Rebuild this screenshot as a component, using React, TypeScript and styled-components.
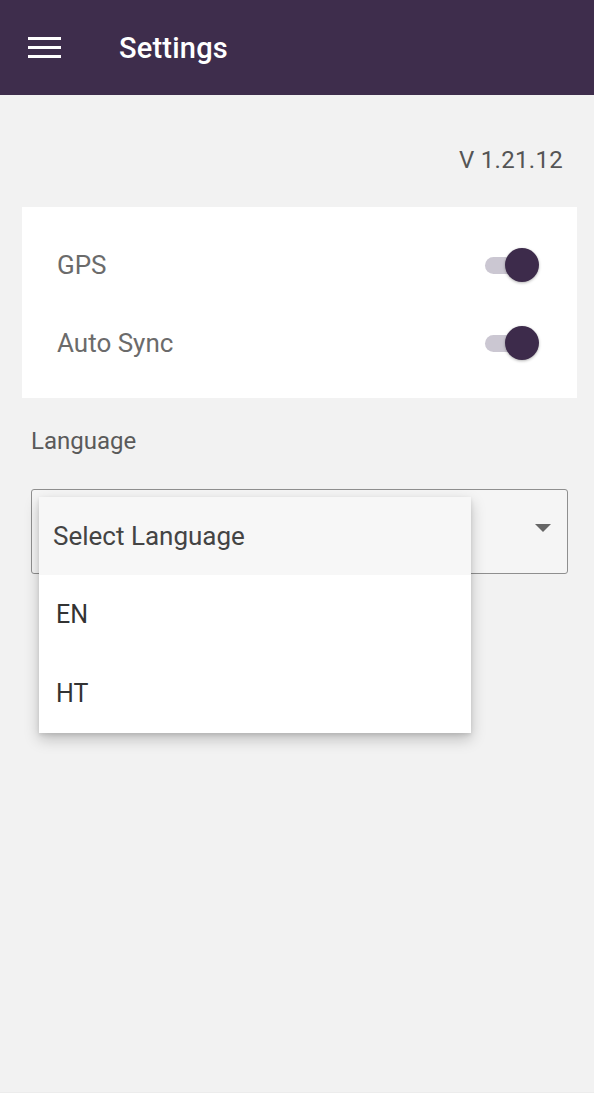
import React, { useState } from 'react'
import styled, { createGlobalStyle } from 'styled-components'

const GlobalStyle = createGlobalStyle`
  html, body {
    margin: 0;
    padding: 0;
    background: #f2f2f2;
    font-family: Roboto, 'Noto Sans', sans-serif;
  }
`

const Page = styled.div`
  display: flex;
  flex-direction: column;
  height: 1106px;
  background: #f2f2f2;
  overflow: hidden;
`

const Header = styled.header`
  display: flex;
  align-items: center;
  height: 95px;
  padding: 0 0 0 28px;
  gap: 58px;
  background: #3e2d4c;
  color: #ffffff;
  flex-shrink: 0;
`

const Title = styled.h1`
  margin: 0;
  font-size: 29px;
  font-weight: 500;
  letter-spacing: 0.2px;
`

const Body = styled.main`
  flex: 1;
  display: flex;
  flex-direction: column;
  padding: 0 17px 0 22px;
`

const Version = styled.div`
  align-self: flex-end;
  margin: 49px 14px 0 0;
  font-size: 24px;
  letter-spacing: 0.3px;
  color: #555555;
  line-height: 32px;
`

const Card = styled.section`
  margin-top: 31px;
  background: #ffffff;
  padding: 38px 38px 35px 35px;
  display: flex;
  flex-direction: column;
  gap: 38px;
`

const Row = styled.div`
  display: flex;
  align-items: center;
  justify-content: space-between;
  height: 40px;
`

const RowLabel = styled.span`
  font-size: 26px;
  color: #6b6b6b;
`

const Track = styled.button<{ $on: boolean }>`
  position: relative;
  width: 56px;
  height: 34px;
  border: 0;
  padding: 0;
  background: transparent;
  cursor: pointer;

  &::before {
    content: '';
    position: absolute;
    left: 2px;
    top: 9px;
    width: 42px;
    height: 17px;
    border-radius: 9px;
    background: ${({ $on }) => ($on ? '#cbc7d2' : '#cfcfcf')};
  }
`

const Thumb = styled.span<{ $on: boolean }>`
  position: absolute;
  top: 0;
  left: ${({ $on }) => ($on ? '22px' : '0')};
  width: 34px;
  height: 34px;
  border-radius: 50%;
  background: ${({ $on }) => ($on ? '#3d2b4b' : '#fafafa')};
  box-shadow: 0 1px 3px rgba(0, 0, 0, 0.3);
`

const SectionLabel = styled.div`
  margin: 28px 0 0 9px;
  font-size: 24px;
  color: #5a5a5a;
  line-height: 30px;
`

const SelectWrap = styled.div`
  position: relative;
  margin: 33px 9px 0 9px;
`

const SelectBox = styled.div`
  height: 83px;
  border: 1px solid #8f8f8f;
  border-radius: 3px;
  background: #f5f5f5;
  display: flex;
  align-items: center;
  justify-content: flex-end;
  padding-right: 16px;
`

const Caret = styled.span`
  width: 0;
  height: 0;
  border-left: 8px solid transparent;
  border-right: 8px solid transparent;
  border-top: 8px solid #666666;
  margin-top: -8px;
`

const Menu = styled.ul`
  position: absolute;
  top: 8px;
  left: 8px;
  width: 432px;
  margin: 0;
  padding: 0;
  list-style: none;
  background: #ffffff;
  box-shadow: 0 6px 14px rgba(0, 0, 0, 0.22), 0 2px 4px rgba(0, 0, 0, 0.1);
`

const Option = styled.li<{ $placeholder?: boolean }>`
  height: ${({ $placeholder }) => ($placeholder ? '78px' : '79px')};
  display: flex;
  align-items: center;
  padding-left: ${({ $placeholder }) => ($placeholder ? '14px' : '17px')};
  font-size: ${({ $placeholder }) => ($placeholder ? '26px' : '25px')};
  color: ${({ $placeholder }) => ($placeholder ? '#444444' : '#333333')};
  background: ${({ $placeholder }) => ($placeholder ? '#f7f7f7' : '#ffffff')};
`

const BottomBar = styled.div`
  height: 13px;
  background: #ffffff;
  border-top: 1px solid #ececec;
  flex-shrink: 0;
`

function MenuIcon() {
  return (
    <svg width="33" height="22" viewBox="0 0 33 22">
      <rect x="0" y="0" width="33" height="3" fill="#ffffff" />
      <rect x="0" y="9" width="33" height="3" fill="#ffffff" />
      <rect x="0" y="18" width="33" height="3" fill="#ffffff" />
    </svg>
  )
}

function Toggle({ on, onChange }: { on: boolean; onChange: () => void }) {
  return (
    <Track $on={on} onClick={onChange}>
      <Thumb $on={on} />
    </Track>
  )
}

export default function App() {
  const [gps, setGps] = useState(true)
  const [sync, setSync] = useState(true)

  return (
    <Page>
      <GlobalStyle />
      <Header>
        <MenuIcon />
        <Title>Settings</Title>
      </Header>
      <Body>
        <Version>V 1.21.12</Version>
        <Card>
          <Row>
            <RowLabel>GPS</RowLabel>
            <Toggle on={gps} onChange={() => setGps(!gps)} />
          </Row>
          <Row>
            <RowLabel>Auto Sync</RowLabel>
            <Toggle on={sync} onChange={() => setSync(!sync)} />
          </Row>
        </Card>
        <SectionLabel>Language</SectionLabel>
        <SelectWrap>
          <SelectBox>
            <Caret />
          </SelectBox>
          <Menu>
            <Option $placeholder>Select Language</Option>
            <Option>EN</Option>
            <Option>HT</Option>
          </Menu>
        </SelectWrap>
      </Body>
      <BottomBar />
    </Page>
  )
}
